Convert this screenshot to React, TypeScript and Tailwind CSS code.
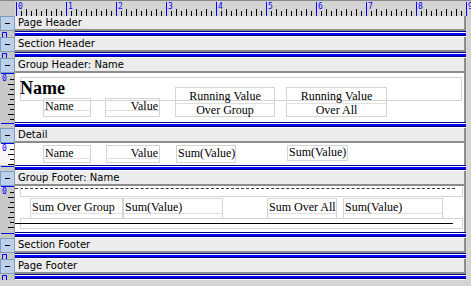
import React from 'react';

const ui = { fontFamily: '"DejaVu Sans", sans-serif' };
const serif = { fontFamily: '"Liberation Serif", "Times New Roman", serif' };

/** Horizontal ruler along the top */
const TopRuler = () => {
  const ticks: React.ReactNode[] = [];
  for (let x = 1; x < 460; x += 5) {
    const step = (x - 1) / 5;
    if (step % 10 === 0) {
      ticks.push(<line key={x} x1={x + 0.5} y1={1} x2={x + 0.5} y2={15} stroke="#0000ff" />);
      ticks.push(
        <text key={'t' + x} x={x + 2} y={8} fontSize={8} fill="#0000ff" fontFamily="DejaVu Sans Mono, monospace">
          {step / 10}
        </text>,
      );
    } else {
      const y1 = step % 2 === 0 ? 8 : 10;
      ticks.push(<line key={x} x1={x + 0.5} y1={y1} x2={x + 0.5} y2={15} stroke="#000" />);
    }
  }
  return (
    <div className="flex h-[16px] border-t border-[#8a8a8a] bg-[#d4d4d4]">
      <div className="w-[15px] shrink-0 bg-[#c8c8c8]" />
      <svg width={456} height={15} className="block">
        {ticks}
      </svg>
    </div>
  );
};

/** Vertical ruler beside a section body */
const SideRuler = ({ height, active }: { height: number; active?: boolean }) => {
  const ticks: React.ReactNode[] = [];
  for (let y = 6; y < height; y += 5) {
    const long = ((y - 1) / 5) % 2 === 0;
    ticks.push(<line key={y} x1={long ? 8 : 10} y1={y + 0.5} x2={14} y2={y + 0.5} stroke="#000" />);
  }
  return (
    <div
      className={`w-[15px] shrink-0 border-r border-[#9a9a9a] ${active ? 'bg-[#fbf4f4]' : 'bg-[#c8c8c8]'}`}
      style={{ height }}
    >
      <svg width={14} height={height} className="block">
        <line x1={1} y1={0.5} x2={14} y2={0.5} stroke="#0000ff" />
        <text x={2} y={8} fontSize={8} fill="#0000ff" fontFamily="DejaVu Sans Mono, monospace">
          0
        </text>
        {ticks}
      </svg>
    </div>
  );
};

/** Section title bar with collapse button */
const SectionBar = ({ title }: { title: string }) => (
  <div className="flex h-[15px]">
    <div className="w-[15px] shrink-0 flex items-center justify-center bg-[#bcd1e9] border border-[#7f9db9]">
      <div className="w-[5px] h-px bg-black" />
    </div>
    <div
      className="w-[451px] bg-[#ececec] border-b-2 border-r-2 border-[#8c8c8c] text-[10px] leading-[13px] pl-[3px] text-black"
      style={ui}
    >
      {title}
    </div>
  </div>
);

/** Blue resize bar under each section */
const ResizeBar = ({ empty }: { empty?: boolean }) => (
  <div className="flex h-[6px]">
    <div className="w-[15px] shrink-0 bg-[#c8c8c8] border-r border-[#9a9a9a]">
      <svg width={14} height={6} className="block">
        {empty ? (
          <path d="M2.5 6V1.5H6.5V6" stroke="#0000ff" fill="none" />
        ) : (
          <line x1={1} y1={1.5} x2={14} y2={1.5} stroke="#0000ff" />
        )}
      </svg>
    </div>
    <div className="w-[451px] flex flex-col bg-white">
      <div className="h-px bg-[#00008b]" />
      <div className="h-px bg-white" />
      <div className="h-[2px] bg-[#0000ff]" />
      <div className="h-px bg-[#00008b]" />
    </div>
  </div>
);

type FieldProps = { x: number; y: number; w: number; h: number; mid?: number; children?: React.ReactNode; align?: string };

/** A report item outline, placed on the section canvas */
const Field = ({ x, y, w, h, mid, children, align = 'text-left' }: FieldProps) => (
  <div className="absolute border border-[#d4d4d4]" style={{ left: x, top: y, width: w, height: h }}>
    {mid !== undefined && <div className="absolute left-0 right-0 h-px bg-[#e0e0e0]" style={{ top: mid }} />}
    <div className={`relative text-[12px] leading-[13px] text-black ${align}`} style={serif}>
      {children}
    </div>
  </div>
);

const Body = ({ height, active, children }: { height: number; active?: boolean; children: React.ReactNode }) => (
  <div className="flex">
    <SideRuler height={height} active={active} />
    <div className="relative w-[451px] bg-white border-r-2 border-[#8c8c8c] overflow-hidden" style={{ height }}>
      {children}
    </div>
  </div>
);

export default function App() {
  return (
    <div className="w-[471px] h-[286px] bg-[#d4d4d4] overflow-hidden">
      <TopRuler />

      <SectionBar title="Page Header" />
      <ResizeBar empty />

      <SectionBar title="Section Header" />
      <ResizeBar empty />

      <SectionBar title="Group Header: Name" />
      <Body height={49}>
        <div className="absolute left-[5px] top-[4px] w-[442px] h-[24px] border border-[#d4d4d4]" />
        <div className="absolute left-[5px] top-[5px] text-[18px] leading-[20px] font-bold text-black" style={serif}>
          Name
        </div>
        <Field x={28} y={25} w={48} h={19} mid={11}>
          <span className="block pl-[1px] pt-[1px]">Name</span>
        </Field>
        <Field x={90} y={25} w={55} h={19} mid={11} align="text-right">
          <span className="block pr-[1px] pt-[1px]">Value</span>
        </Field>
        <Field x={160} y={14} w={100} h={30} mid={15} align="text-center">
          <span className="block leading-[14px] pt-[1px]">
            Running Value
            <br />
            Over Group
          </span>
        </Field>
        <Field x={271} y={14} w={101} h={30} mid={15} align="text-center">
          <span className="block leading-[14px] pt-[1px]">
            Running Value
            <br />
            Over All
          </span>
        </Field>
      </Body>
      <ResizeBar />

      <SectionBar title="Detail" />
      <Body height={22} active>
        <Field x={28} y={2} w={48} h={18} mid={12}>
          <span className="block pl-[1px] pt-[1px]">Name</span>
        </Field>
        <Field x={91} y={2} w={54} h={18} mid={12} align="text-right">
          <span className="block pr-[1px] pt-[1px]">Value</span>
        </Field>
        <Field x={161} y={2} w={60} h={18}>
          <span className="block pl-[1px] pt-[1px]">Sum(Value)</span>
        </Field>
        <Field x={272} y={2} w={61} h={16}>
          <span className="block pl-[1px]">Sum(Value)</span>
        </Field>
      </Body>
      <ResizeBar />

      <SectionBar title="Group Footer: Name" />
      <Body height={46}>
        <div className="absolute left-0 top-[2px] w-[440px] border-t border-dashed border-[#333]" />
        <div className="absolute left-[5px] top-[1px] w-[443px] h-[10px] border border-[#d4d4d4] border-t-0" />
        <Field x={15} y={12} w={93} h={21} mid={14}>
          <span className="block pl-[1px] pt-[2px]">Sum Over Group</span>
        </Field>
        <Field x={108} y={12} w={100} h={21} mid={14}>
          <span className="block pl-[1px] pt-[2px]">Sum(Value)</span>
        </Field>
        <Field x={252} y={12} w={70} h={21} mid={14}>
          <span className="block pl-[1px] pt-[2px]">Sum Over All</span>
        </Field>
        <Field x={328} y={12} w={100} h={21} mid={14}>
          <span className="block pl-[1px] pt-[2px]">Sum(Value)</span>
        </Field>
        <div className="absolute left-[5px] top-[32px] w-[443px] h-[11px] border border-[#d4d4d4]" />
        <div className="absolute left-0 top-[37px] w-[438px] h-px bg-black" />
      </Body>
      <ResizeBar />

      <SectionBar title="Section Footer" />
      <ResizeBar empty />

      <SectionBar title="Page Footer" />
      <ResizeBar empty />
    </div>
  );
}
